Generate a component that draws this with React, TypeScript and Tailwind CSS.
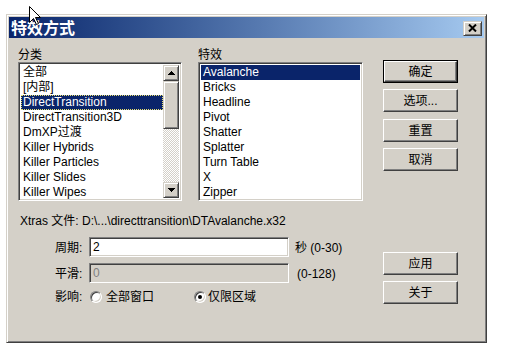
import React from 'react';

const categories = [
  '全部',
  '[内部]',
  'DirectTransition',
  'DirectTransition3D',
  'DmXP过渡',
  'Killer Hybrids',
  'Killer Particles',
  'Killer Slides',
  'Killer Wipes',
];

const effects = ['Avalanche', 'Bricks', 'Headline', 'Pivot', 'Shatter', 'Splatter', 'Turn Table', 'X', 'Zipper'];

const raised =
  'bg-[#d4d0c8] border border-t-white border-l-white border-r-[#404040] border-b-[#404040] shadow-[inset_-1px_-1px_#808080,inset_1px_1px_#d4d0c8]';
const raisedSmall =
  'bg-[#d4d0c8] border border-t-[#d4d0c8] border-l-[#d4d0c8] border-r-[#404040] border-b-[#404040] shadow-[inset_1px_1px_#ffffff,inset_-1px_-1px_#808080]';
const sunken =
  'border border-t-[#808080] border-l-[#808080] border-r-white border-b-white shadow-[inset_1px_1px_#404040,inset_-1px_-1px_#d4d0c8]';

function Button({ label, isDefault = false, className = '' }: { label: string; isDefault?: boolean; className?: string }) {
  if (isDefault) {
    return (
      <div className={`w-[75px] h-[23px] border border-black ${className}`}>
        <div className={`w-full h-full flex items-center justify-center ${raised}`}>{label}</div>
      </div>
    );
  }
  return <div className={`w-[75px] h-[23px] flex items-center justify-center ${raised} ${className}`}>{label}</div>;
}

function Arrow({ down = false }: { down?: boolean }) {
  return (
    <div className={`w-[16px] h-[16px] flex items-center justify-center ${raisedSmall}`}>
      <svg width="7" height="4" viewBox="0 0 7 4" className={down ? 'rotate-180' : ''}>
        <path d="M3 0h1v1h1v1h1v1h1v1H0V3h1V2h1V1h1z" fill="#000" />
      </svg>
    </div>
  );
}

function Radio({ checked = false }: { checked?: boolean }) {
  return (
    <div
      className={`w-[12px] h-[12px] rounded-full bg-white flex items-center justify-center border border-t-[#808080] border-l-[#808080] border-r-white border-b-white shadow-[inset_1px_1px_#404040,inset_-1px_-1px_#d4d0c8]`}
    >
      {checked && <div className="w-[4px] h-[4px] rounded-full bg-black" />}
    </div>
  );
}

export default function App() {
  return (
    <div className="relative w-[508px] h-[357px] bg-white overflow-hidden font-['Liberation_Sans','Noto_Sans_CJK_SC',sans-serif] text-[12px] text-black">
      <div className="pl-[6px] pt-[14px]">
        <div className="w-[481px] h-[329px] bg-[#d4d0c8] p-[2px] border border-t-[#d4d0c8] border-l-[#d4d0c8] border-r-[#404040] border-b-[#404040] shadow-[inset_1px_1px_#ffffff,inset_-1px_-1px_#808080]">
          {/* Title bar */}
          <div className="h-[21px] flex items-center justify-between bg-gradient-to-r from-[#0a246a] to-[#a6caf0]">
            <span className="pl-[2px] text-white font-bold text-[16px] leading-[21px] font-['Noto_Sans_CJK_SC',sans-serif]">
              特效方式
            </span>
            <div className={`w-[19px] h-[15px] mr-[2px] mt-[1px] flex items-center justify-center ${raisedSmall}`}>
              <svg width="9" height="8" viewBox="0 0 9 8">
                <path d="M1 0.5 L8 7.5 M8 0.5 L1 7.5" stroke="#000" strokeWidth="2" />
              </svg>
            </div>
          </div>

          {/* Content */}
          <div className="pl-[9px]">
            <div className="flex pt-[10px]">
              <div className="w-[164px]">
                <div className="h-[14px] leading-[14px]">分类</div>
                <div className={`h-[139px] bg-white p-[2px] flex ${sunken}`}>
                  <div className="flex-1">
                    {categories.map((c, i) => (
                      <div
                        key={c}
                        className={`h-[15px] leading-[15px] pl-[2px] whitespace-nowrap ${
                          i === 2
                            ? 'bg-[#0a246a] text-white outline-1 outline-dotted outline-[#e8e070] -outline-offset-1'
                            : ''
                        }`}
                      >
                        {c}
                      </div>
                    ))}
                  </div>
                  <div className="w-[16px] flex flex-col">
                    <Arrow />
                    <div className={`h-[48px] ${raisedSmall}`} />
                    <div className="flex-1 bg-[image:repeating-conic-gradient(#d4d0c8_0_25%,#ffffff_0_50%)] bg-[length:2px_2px]" />
                    <Arrow down />
                  </div>
                </div>
              </div>

              <div className="w-[165px] ml-[16px]">
                <div className="h-[14px] leading-[14px]">特效</div>
                <div className={`h-[139px] bg-white p-[2px] ${sunken}`}>
                  {effects.map((e, i) => (
                    <div
                      key={e}
                      className={`h-[15px] leading-[15px] pl-[2px] whitespace-nowrap ${i === 0 ? 'bg-[#0a246a] text-white' : ''}`}
                    >
                      {e}
                    </div>
                  ))}
                </div>
              </div>

              <div className="w-[75px] ml-[20px] pt-[12px] flex flex-col">
                <Button label="确定" isDefault />
                <Button label="选项..." className="mt-[6px]" />
                <Button label="重置" className="mt-[7px]" />
                <Button label="取消" className="mt-[6px]" />
              </div>
            </div>

            <div className="mt-[13px] h-[14px] leading-[14px] pl-[2px] whitespace-nowrap">
              Xtras 文件: {'D:\\...\\directtransition\\DTAvalanche.x32'}
            </div>

            <div className="flex mt-[9px]">
              <div className="w-[365px] pl-[37px]">
                <div className="flex items-start h-[20px]">
                  <div className="w-[34px] pt-[4px] leading-[14px]">周期:</div>
                  <div className={`w-[200px] h-[20px] bg-white pl-[3px] leading-[18px] ${sunken}`}>2</div>
                  <div className="ml-[6px] pt-[4px] leading-[14px] whitespace-nowrap">秒 (0-30)</div>
                </div>
                <div className="flex items-start h-[20px] mt-[6px]">
                  <div className="w-[34px] pt-[4px] leading-[14px]">平滑:</div>
                  <div className={`w-[200px] h-[20px] bg-[#d4d0c8] text-[#808080] pl-[3px] leading-[18px] ${sunken}`}>0</div>
                  <div className="ml-[8px] pt-[4px] leading-[14px] whitespace-nowrap">(0-128)</div>
                </div>
                <div className="flex items-center h-[14px] mt-[7px]">
                  <div className="w-[35px] leading-[14px]">影响:</div>
                  <Radio />
                  <span className="ml-[4px]">全部窗口</span>
                  <div className="ml-[40px]">
                    <Radio checked />
                  </div>
                  <span className="ml-[2px]">仅限区域</span>
                </div>
              </div>
              <div className="w-[75px] pt-[15px] flex flex-col">
                <Button label="应用" />
                <Button label="关于" className="mt-[6px]" />
              </div>
            </div>
          </div>
        </div>
      </div>

      {/* Mouse pointer */}
      <svg className="absolute left-[29px] top-[6px]" width="13" height="20" viewBox="0 0 13 20">
        <path d="M0.5 0.5 L0.5 16.5 L4.5 12.5 L7.5 18.5 L9.5 17.5 L6.5 11.5 L11.5 11.5 Z" fill="#fff" stroke="#000" strokeWidth="1" />
      </svg>
    </div>
  );
}
